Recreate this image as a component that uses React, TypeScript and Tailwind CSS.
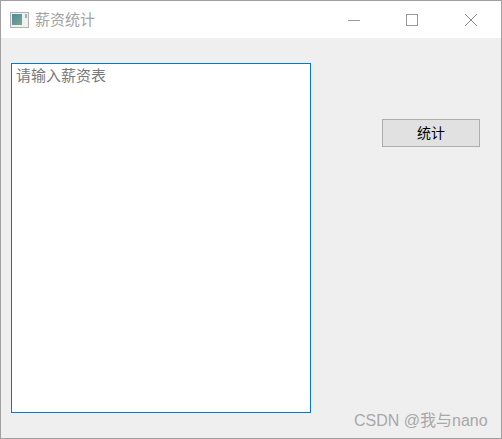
const cjk = "font-['Liberation_Sans','Noto_Sans_CJK_SC',sans-serif]"

function WindowIcon() {
  return (
    <svg width="20" height="16" viewBox="0 0 20 16" className="shrink-0">
      <defs>
        <linearGradient id="pane" x1="0" y1="0" x2="1" y2="1">
          <stop offset="0" stopColor="#4d86a8" />
          <stop offset="1" stopColor="#79ab82" />
        </linearGradient>
      </defs>
      <rect x="0.5" y="0.5" width="18" height="15" fill="#f0f0f0" stroke="#b0b0b0" />
      <rect x="2" y="2" width="10" height="11" fill="url(#pane)" />
      <rect x="15" y="2" width="2" height="4" fill="#8fb8bc" />
    </svg>
  )
}

export default function App() {
  return (
    <div className={`relative flex h-[439px] w-[502px] flex-col border border-[#a0a0a0] bg-[#efefef] ${cjk}`}>
      {/* Title bar */}
      <div className="flex h-[37px] items-center bg-white pl-[9px]">
        <WindowIcon />
        <span className="ml-[5px] text-[15px] leading-none text-[#a3a3a3]">薪资统计</span>
        <div className="ml-auto flex items-center">
          <div className="flex w-[59px] justify-center">
            <svg width="12" height="12" viewBox="0 0 12 12">
              <path d="M0 6.5H12" stroke="#999999" />
            </svg>
          </div>
          <div className="flex w-[59px] justify-center pr-[2px]">
            <svg width="12" height="12" viewBox="0 0 12 12">
              <rect x="0.5" y="0.5" width="11" height="11" fill="none" stroke="#999999" />
            </svg>
          </div>
          <div className="flex w-[59px] justify-center pr-[2px]">
            <svg width="12" height="12" viewBox="0 0 12 12">
              <path d="M0 0L12 12M12 0L0 12" stroke="#8a8a8a" />
            </svg>
          </div>
        </div>
      </div>

      {/* Body */}
      <div className="flex items-start pl-[10px] pt-[25px]">
        <textarea
          readOnly
          placeholder="请输入薪资表"
          className="h-[350px] w-[300px] resize-none border border-[#0078d7] bg-white px-[4px] py-[2px] text-[15px] leading-[19px] outline-none placeholder:text-[#7a7a7a]"
        />
        <button className="ml-[71px] mt-[56px] h-[28px] w-[98px] border border-[#adadad] bg-[#e1e1e1] text-sm leading-none text-black">
          统计
        </button>
      </div>

      {/* Watermark */}
      <span className="absolute left-[353px] top-[411px] whitespace-nowrap text-base leading-[18px] text-[#a8a8a8]">
        CSDN @我与nano
      </span>
    </div>
  )
}
